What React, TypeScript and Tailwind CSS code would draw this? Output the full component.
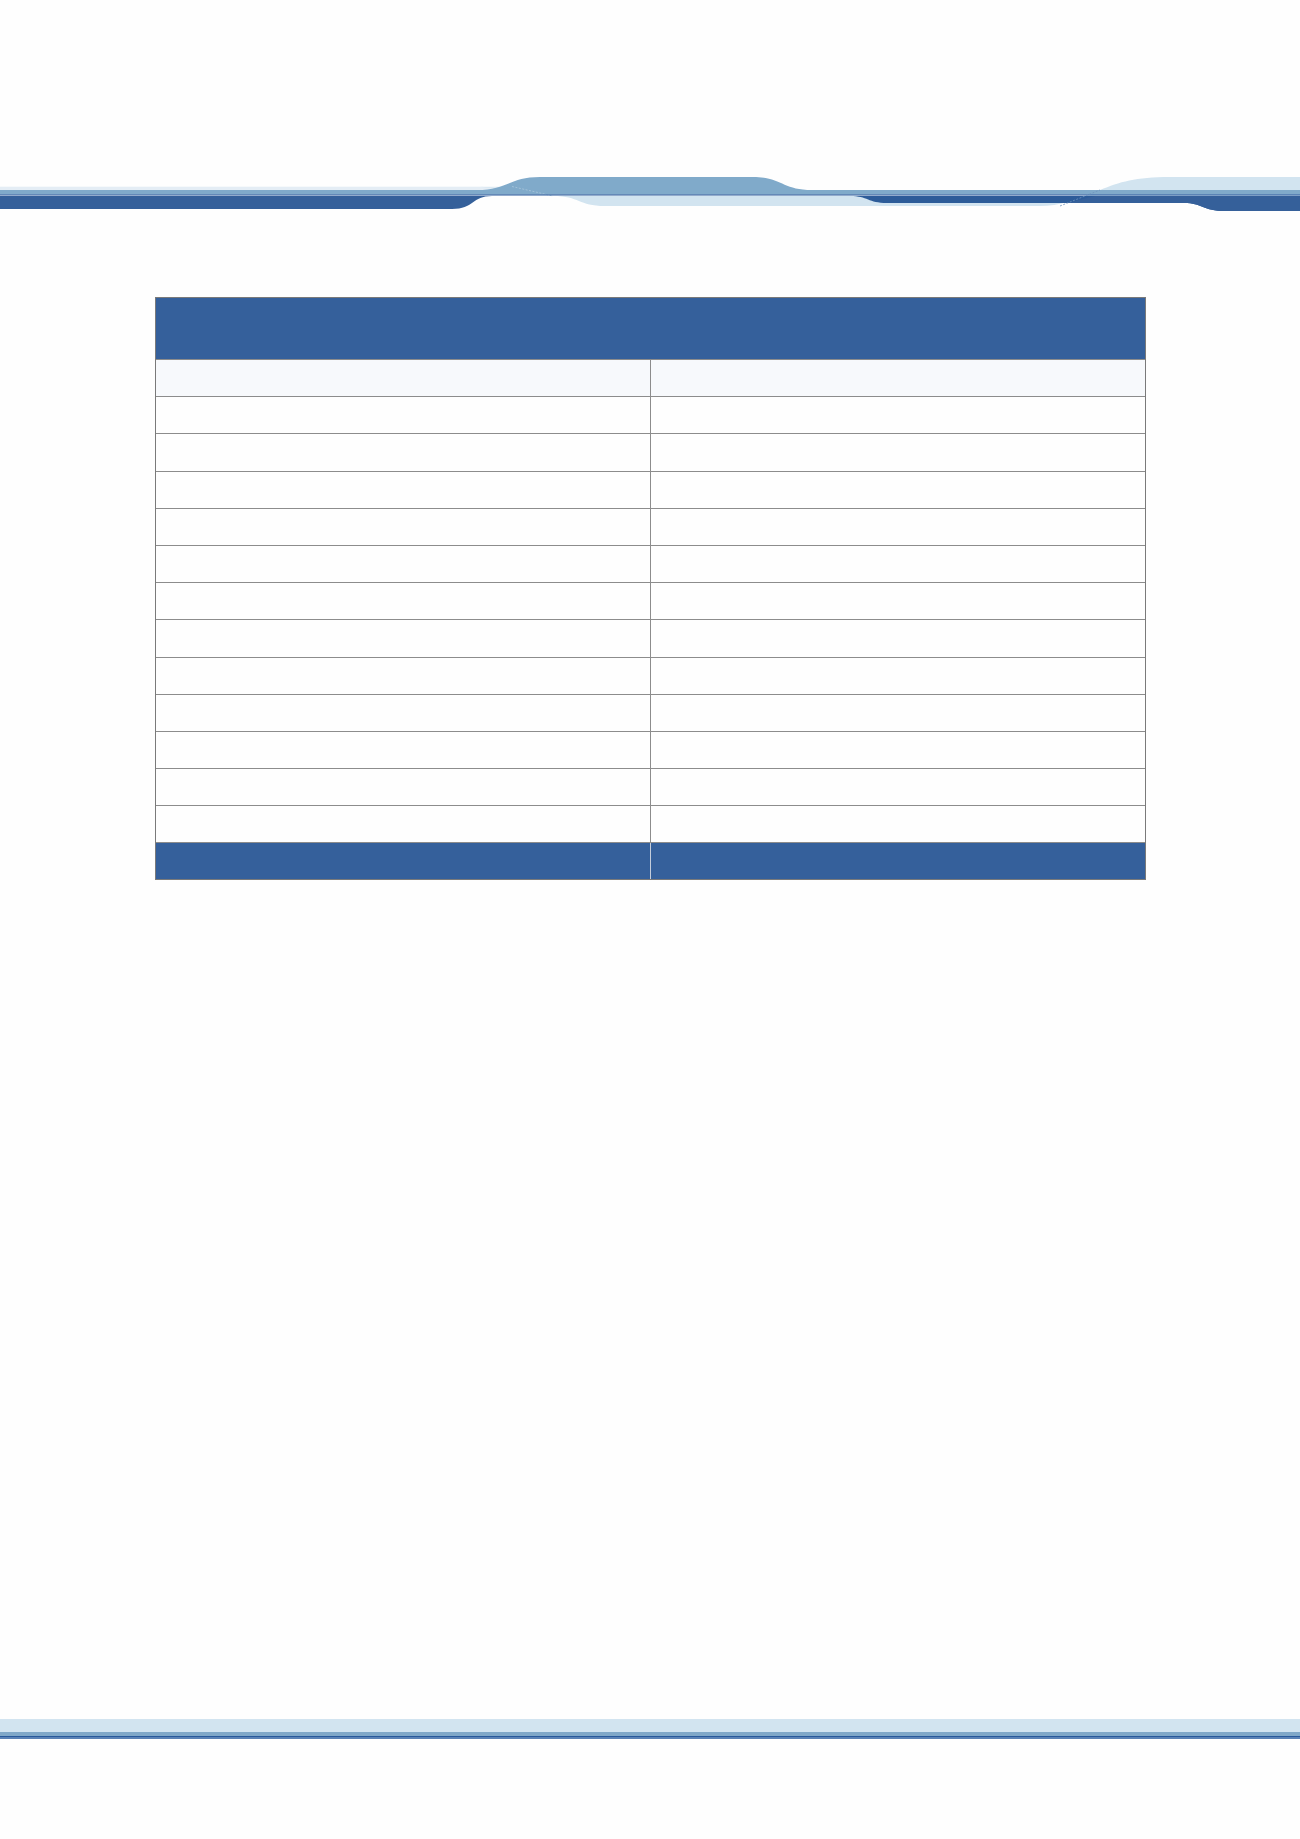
import React from "react";

const rows = Array.from({ length: 13 }, (_, i) => i);

function HeaderWave() {
  return (
    <svg
      className="block w-full h-[40px]"
      viewBox="0 175 1300 40"
      preserveAspectRatio="none"
    >
      {/* pale strip on the left */}
      <rect x="0" y="186.7" width="540" height="3.5" fill="#e4edf5" />
      {/* light ribbon */}
      <path
        d="M480 186.7 C510 188 530 194 553 196 C580 196 578 206 605 206 H1040 C1060 206 1075 200 1100 190 C1120 182 1135 177 1170 177 H1300 V196 H553 Z"
        fill="#d2e4f0"
      />
      {/* medium wave */}
      <path
        d="M0 190 H477 C507 190 510 177 540 177 H753 C782 177 782 190 812 190 H1300 V194.4 H0 Z"
        fill="#80aaca"
      />
      <path d="M512 186.5 L553 196" stroke="#a9c6dc" strokeWidth="0.8" strokeDasharray="2 1.5" fill="none" />
      {/* thin dark line */}
      <rect x="0" y="194.4" width="1300" height="1.1" fill="#28589a" />
      {/* main dark band */}
      <path
        d="M0 196 H492 C472 196 474 209 452 209 H0 Z"
        fill="#35609a"
      />
      <path
        d="M850 196 H1300 V211 H1225 C1203 211 1202 203 1184 203 H887 C868 203 868 196 850 196 Z"
        fill="#2d5c99"
      />
      <path
        d="M1095 196 H1300 V211 H1225 C1203 211 1202 203 1184 203 H1068 C1078 200 1086 198 1095 196 Z"
        fill="#35609a"
      />
      <path d="M1060 206 L1100 190" stroke="#6f93bd" strokeWidth="0.8" strokeDasharray="2 1.5" fill="none" />
    </svg>
  );
}

export default function App() {
  return (
    <div className="w-full min-h-[1839px] bg-[#fefefe] pt-[175px]">
      <HeaderWave />

      {/* Table */}
      <div className="ml-[155px] mt-[82px] w-[991px] border border-[#7a7a7a] bg-white">
        <div className="h-[61px] bg-[#35609b]"></div>
        {rows.map((i) => (
          <div
            key={i}
            className={`grid grid-cols-2 h-[37.2px] border-t border-[#8c8c8c] ${
              i === 0 ? "bg-[#f7f9fc]" : "bg-[#fefefe]"
            }`}
          >
            <div className="border-r border-[#8c8c8c]"></div>
            <div></div>
          </div>
        ))}
        <div className="grid grid-cols-2 h-[36.4px] border-t border-[#8c8c8c] bg-[#35609b]">
          <div className="border-r border-[#c4cddb]"></div>
          <div></div>
        </div>
      </div>

      {/* Footer band */}
      <div className="mt-[839px]">
        <div className="h-[13px] bg-[#d2e4f0]"></div>
        <div className="h-[3.7px] bg-[#80a8c8]"></div>
        <div className="h-[1px] bg-[#28589a]"></div>
        <div className="h-[2.3px] bg-[#5a82b5]"></div>
      </div>
    </div>
  );
}
